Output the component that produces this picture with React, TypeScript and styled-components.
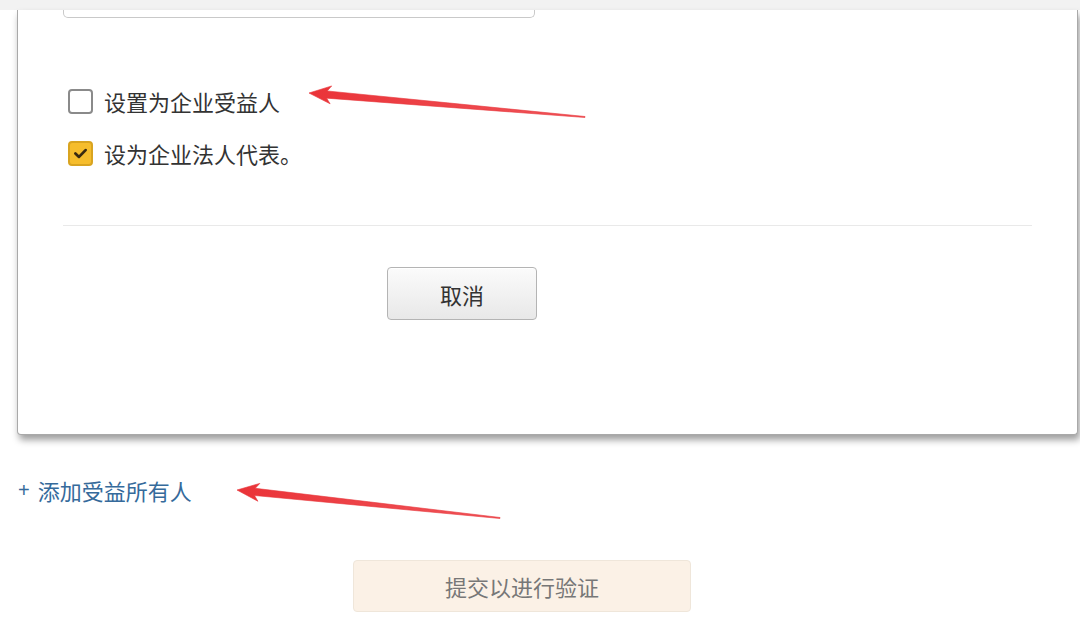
import React from "react";
import styled, { createGlobalStyle } from "styled-components";

const GlobalStyle = createGlobalStyle`
  html, body {
    margin: 0;
    padding: 0;
    background: #ffffff;
  }
  * {
    box-sizing: border-box;
  }
`;

const CJK = `"Noto Sans CJK SC", "Microsoft YaHei", sans-serif`;

const Page = styled.div`
  position: relative;
  width: 1080px;
  height: 636px;
  overflow: hidden;
  background: #ffffff;
  font-family: ${CJK};
  color: #333333;
`;

const TopBar = styled.div`
  height: 10px;
  background: #f2f2f2;
`;

const Card = styled.div`
  margin: 0 2px 0 17px;
  padding: 0 45px 114px;
  background: #ffffff;
  border: 1px solid #a9a9a9;
  border-top: none;
  border-radius: 0 0 4px 4px;
  box-shadow: 2px 5px 7px rgba(0, 0, 0, 0.38);
`;

const InputStub = styled.div`
  width: 472px;
  height: 8px;
  border: 1px solid #c9c9c9;
  border-top: none;
  border-radius: 0 0 5px 5px;
  margin-bottom: 68px;
`;

const Options = styled.div`
  display: flex;
  flex-direction: column;
  gap: 22px;
  padding-left: 5px;
`;

const OptionRow = styled.label`
  display: flex;
  align-items: center;
  gap: 11px;
  height: 30px;
  font-size: 22px;
  line-height: 30px;
  color: #333333;
`;

const Box = styled.span<{ $checked?: boolean }>`
  display: flex;
  align-items: center;
  justify-content: center;
  width: 25px;
  height: 25px;
  border-radius: 4px;
  border: 2px solid ${(p) => (p.$checked ? "#d9a420" : "#8a8a8a")};
  background: ${(p) => (p.$checked ? "#f6bd2c" : "#ffffff")};
`;

const Divider = styled.hr`
  margin: 57px 0 0;
  border: none;
  border-top: 1px solid #e9e9e9;
`;

const CancelButton = styled.button`
  display: block;
  margin: 41px 0 0 324px;
  width: 150px;
  height: 53px;
  border: 1px solid #b4b4b4;
  border-radius: 4px;
  background: linear-gradient(#fbfbfb, #e8e8e8);
  box-shadow: inset 0 1px 0 #ffffff;
  font-family: ${CJK};
  font-size: 22px;
  color: #333333;
`;

const Footer = styled.div`
  display: flex;
  flex-direction: column;
  padding: 40px 0 0 18px;
`;

const AddLink = styled.a`
  display: flex;
  align-items: center;
  gap: 8px;
  height: 30px;
  font-size: 22px;
  line-height: 30px;
  color: #356a9b;
  text-decoration: none;
`;

const Plus = styled.span`
  font-family: "Liberation Sans", sans-serif;
  font-size: 20px;
`;

const SubmitButton = styled.button`
  margin: 55px 0 0 335px;
  width: 338px;
  height: 52px;
  border: 1px solid #efe6da;
  border-radius: 4px;
  background: #fbf1e6;
  font-family: ${CJK};
  font-size: 22px;
  color: #777777;
`;

const Overlay = styled.svg`
  position: absolute;
  left: 0;
  top: 0;
  pointer-events: none;
`;

type Pt = [number, number];

function arrowPoints(tip: Pt, tail: Pt) {
  const dx = tail[0] - tip[0];
  const dy = tail[1] - tip[1];
  const len = Math.hypot(dx, dy);
  const u: Pt = [dx / len, dy / len];
  const n: Pt = [-u[1], u[0]];
  const at = (along: number, side: number): Pt => [
    tip[0] + u[0] * along + n[0] * side,
    tip[1] + u[1] * along + n[1] * side,
  ];
  const pts: Pt[] = [
    tip,
    at(22, 9),
    at(18, 3.6),
    at(len * 0.5, 2.2),
    at(len, 0.5),
    at(len, -0.5),
    at(len * 0.5, -2.2),
    at(18, -3.6),
    at(22, -9),
  ];
  return pts.map((p) => p.join(",")).join(" ");
}

function Arrow({ tip, tail }: { tip: Pt; tail: Pt }) {
  return (
    <polygon
      points={arrowPoints(tip, tail)}
      fill="url(#arrowFill)"
      stroke="#e8353a"
      strokeWidth={0.6}
      strokeLinejoin="round"
    />
  );
}

function Check() {
  return (
    <svg width="17" height="17" viewBox="0 0 16 16">
      <path
        d="M3.2 8 L6.6 11.2 L12.8 4.8"
        fill="none"
        stroke="#3a2a10"
        strokeWidth="2.6"
        strokeLinecap="round"
        strokeLinejoin="round"
      />
    </svg>
  );
}

export default function App() {
  return (
    <>
      <GlobalStyle />
      <Page>
        <TopBar />
        <Card>
          <InputStub />
          <Options>
            <OptionRow>
              <Box />
              设置为企业受益人
            </OptionRow>
            <OptionRow>
              <Box $checked>
                <Check />
              </Box>
              设为企业法人代表。
            </OptionRow>
          </Options>
          <Divider />
          <CancelButton>取消</CancelButton>
        </Card>
        <Footer>
          <AddLink href="#">
            <Plus>+</Plus>
            添加受益所有人
          </AddLink>
          <SubmitButton>提交以进行验证</SubmitButton>
        </Footer>
        <Overlay width="1080" height="636" viewBox="0 0 1080 636">
          <defs>
            <linearGradient id="arrowFill" x1="0" y1="0" x2="1" y2="0">
              <stop offset="0" stopColor="#ea3338" />
              <stop offset="1" stopColor="#f0555a" />
            </linearGradient>
          </defs>
          <Arrow tip={[309, 93]} tail={[585, 117]} />
          <Arrow tip={[237, 490]} tail={[500, 518]} />
        </Overlay>
      </Page>
    </>
  );
}
